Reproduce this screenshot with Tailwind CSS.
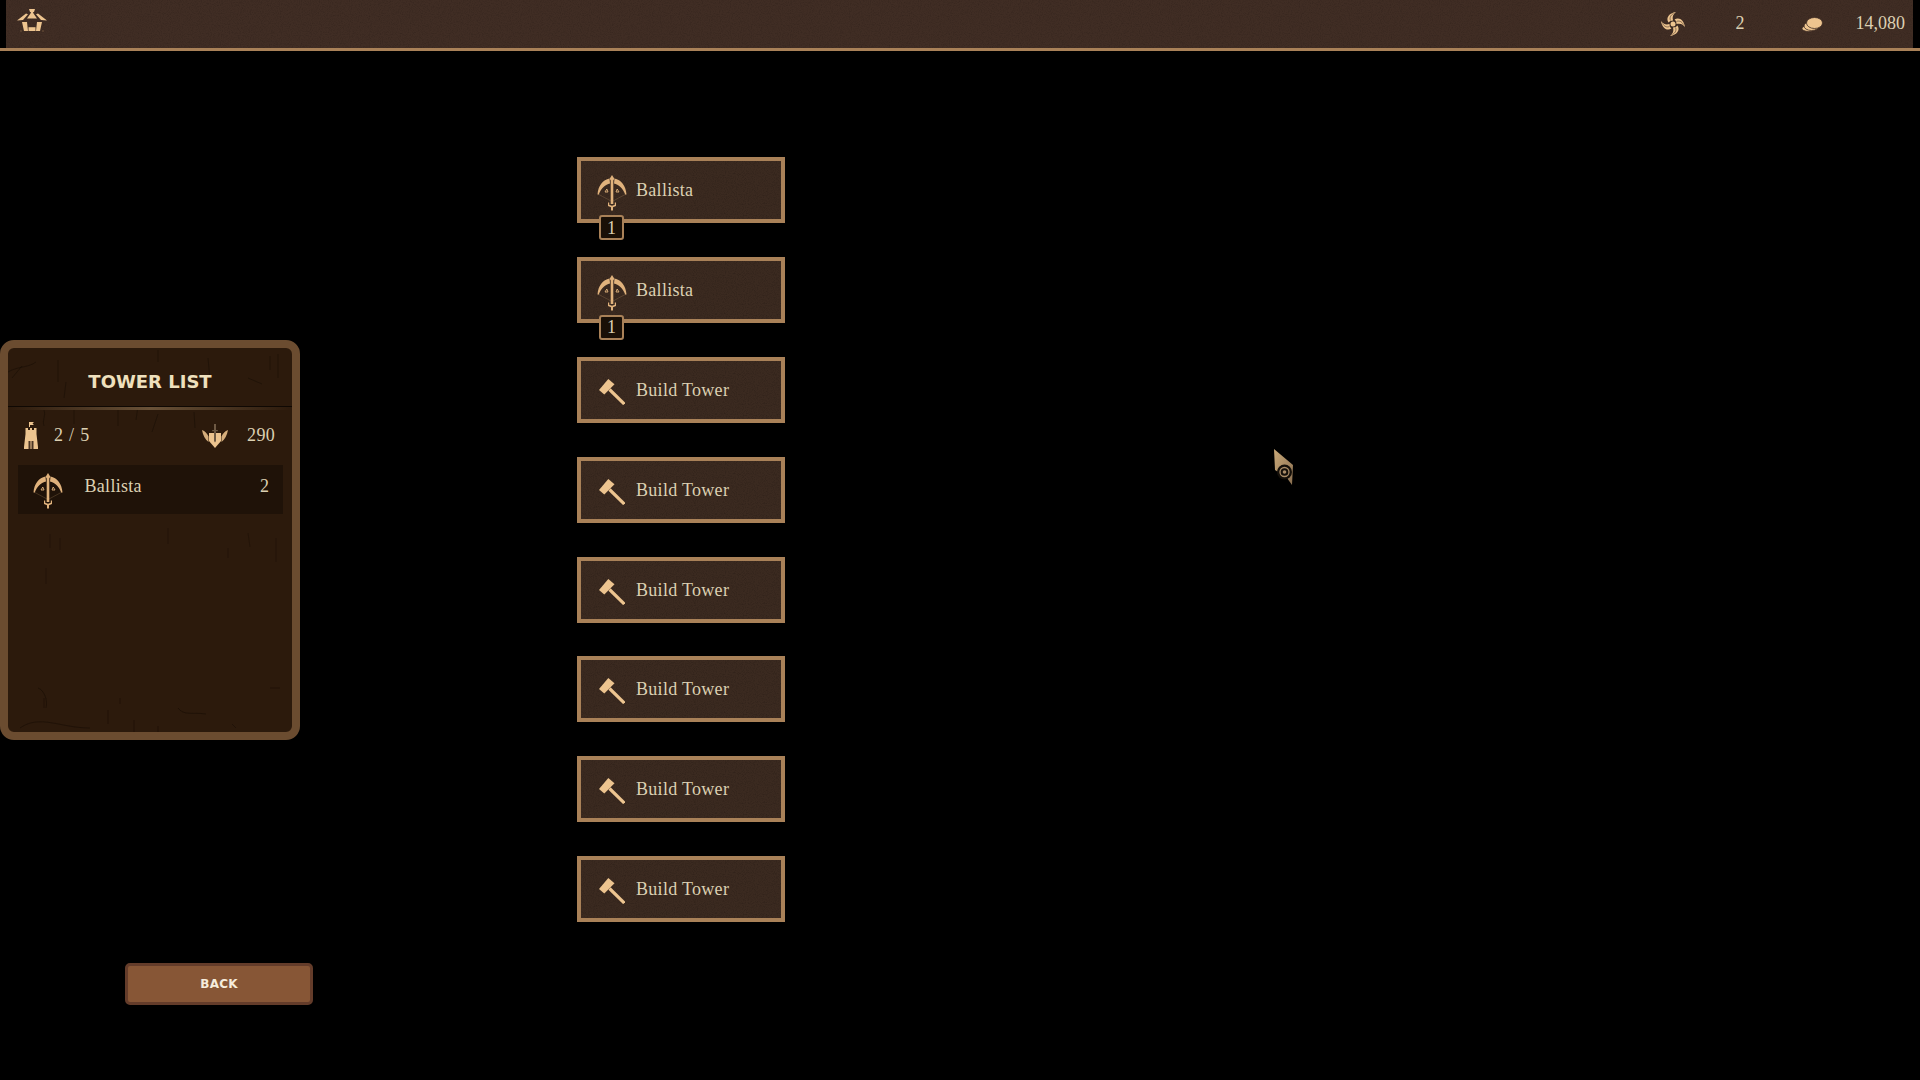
<!DOCTYPE html>
<html lang="en">
  <head>
    <meta charset="UTF-8" />
    <title>Tower List</title>
    <script src="https://cdn.jsdelivr.net/npm/@tailwindcss/browser@4"></script>
  </head>
  <body class="bg-black font-['Liberation_Serif',serif] text-[18px] leading-none text-[#dcd0b2]">
    <!-- shared icons and grain -->
    <svg class="absolute w-0 h-0">
      <defs>
        <filter id="grain" x="0" y="0" width="100%" height="100%">
          <feTurbulence type="fractalNoise" baseFrequency="0.9" numOctaves="2" seed="4" />
          <feColorMatrix values="0 0 0 0 0  0 0 0 0 0  0 0 0 0 0  0 0 0 -1.5 0.85" />
        </filter>
        <symbol id="ballista" viewBox="0 0 30 36">
          <path d="M15 0l2.500 4-1.300 1.200H13.800L12.500 4z" fill="#e0b27c" />
          <path d="M13.700 5h2.600v24h-2.600z" fill="#e0b27c" />
          <path d="M11 27.500h1.200v2.300l2.800 1 2.800-1v-2.300H19V31l-3 1.300V35.500h-2v-3.200L11 31z" fill="#e0b27c" />
          <path d="M.5 19.500C1 11 6 4.500 12.500 3.500l.5 5C8.500 9.500 4 13 1.800 19.500zM29.500 19.500C29 11 24 4.500 17.500 3.500l-.5 5C21.500 9.500 26 13 28.200 19.500z" fill="#e0b27c" />
          <path d="M1 19l13 7M29 19l-13 7" stroke="#e0b27c" stroke-width=".4" opacity=".5" />
          <path d="M8 17l1.800-3 1.200 3zM22 17l-1.800-3-1.200 3z" fill="none" stroke="#e0b27c" stroke-width=".9" />
        </symbol>
        <symbol id="hammer" viewBox="0 0 26 26">
          <path d="M0 11L9.300 0l6.200 5.300L5.300 15.500z" fill="#edc48f" />
          <path d="M10.500 10.500L25.300 25" stroke="#edc48f" stroke-width="3.200" />
        </symbol>
      </defs>
    </svg>

    <div class="relative h-[1080px] overflow-hidden">
      <!-- top bar -->
      <header class="relative ml-[6px] mr-[7px] h-[48px] bg-[#402d24] flex items-center">
        <svg class="absolute inset-0 w-full h-full opacity-20"><rect width="100%" height="100%" filter="url(#grain)" /></svg>
        <svg class="absolute left-[11px] top-[8px] w-[30px] h-[25px]" viewBox="17 8 30 25" fill="#edc48f">
          <path d="M29 9h6l-1 3h-1l.500 1.500L37 18.500H27l3.500-5L31 12h-1z" />
          <path d="M17 20.500l9-7 2 .7-5 5.800zM47 20.500l-9-7-2 .7 5 5.800z" />
          <path d="M22 22h5l1 9h-4zM42 22h-5l-1 9h4z" />
          <path d="M28.500 27.200h7V31h-7z" />
          <path d="M20 30.500h2v1h-2zM42 30.500h2v1h-2z" fill="#6a5138" />
        </svg>
        <div class="relative ml-auto flex items-center h-full pb-[2px]">
          <svg class="w-[24px] h-[24px] mr-[51px] mt-[2px]" viewBox="-12 -12 24 24" fill="#edc48f">
            <circle r="2.500" />
            <g id="blade">
              <path d="M-4.500 -1.500C-7.500 -6 -4 -11 3 -12C0 -10 -1 -7 0 -3.500C-2 -3.500 -3.500 -2.800 -4.500 -1.500z" />
              <path d="M-2.500 -3.500C-3.800 -6.500 -2 -9 .5 -10.500" fill="none" stroke="#402d24" stroke-width=".6" />
            </g>
            <use href="#blade" transform="rotate(90)" />
            <use href="#blade" transform="rotate(180)" />
            <use href="#blade" transform="rotate(270)" />
          </svg>
          <span class="w-[9px] text-center">2</span>
          <svg class="w-[21px] h-[15px] ml-[57px] mt-[2px]" viewBox="0 0 21 15" stroke="#402d24" stroke-width=".8" fill="#edc48f">
            <ellipse cx="6.500" cy="11.500" rx="6.500" ry="3" />
            <ellipse cx="9.500" cy="9" rx="7.500" ry="4.500" />
            <ellipse cx="12.500" cy="6" rx="8" ry="5.500" />
          </svg>
          <span class="ml-[33px] mr-[8px]">14,080</span>
        </div>
      </header>
      <div class="h-[3px] bg-[#a98158]"></div>

      <main class="flex">
        <!-- left column -->
        <section class="w-[577px] shrink-0">
          <div class="relative mt-[289px] w-[300px] h-[400px] border-8 border-[#6b4c30] rounded-[14px] bg-[#2c1a0c] overflow-hidden">
            <svg class="absolute inset-0 w-full h-full" viewBox="0 0 284 384" fill="none" stroke="#0f0803" stroke-width=".8">
              <path d="M50 12v22M58 34l-2 16M150 2v12M200 10l2 22M262 8v14M270 6v24M0 24c10-6 20-4 28-10M4 30l10-12M110 62v16M130 58l-2 14M150 66l-6 18M186 64l1 16M66 62v14M36 62c2 6-2 10 0 16M240 30l14 6" opacity=".45" />
              <path d="M42 186v14M38 220v16M160 180v16M240 185l2 14M268 190v24M52 190v12M220 200v10" opacity=".4" />
              <path d="M30 340c6 2 10 12 8 20M36 350v10M112 350v6M100 362v14M126 372v12M170 360c6 8 14 4 28 6M150 378v6M224 376l4 4M262 340h10M12 380c20-14 40 0 70 0" opacity=".5" />
            </svg>
            <div class="relative h-[58px] pt-[9px] flex items-center justify-center">
              <h2 class="font-['DejaVu_Sans',sans-serif] font-bold text-[18px] text-[#efe0bd]">TOWER LIST</h2>
            </div>
            <div class="relative border-t border-[#0f0803] h-[4px] bg-gradient-to-r from-transparent via-[#6a5238] to-transparent"></div>
            <div class="relative h-[55px] pb-[5px] pl-[16px] pr-[17px] flex items-center">
              <svg class="w-[14px] h-[27px] mr-[16px]" viewBox="0 0 14 27" fill="#edc48f">
                <path d="M5 0h5l-1.500 1.500L10 3H6v2H5z" />
                <path d="M1.500 6h2.500v2h2V6h2v2h2V6h2.500v6l1.500 13v2H0v-2l1.500-13z" />
                <path d="M4.500 27v-8h2v8zM7.500 27v-8h2v8z" fill="#4a3524" />
              </svg>
              <span class="tracking-[0.8px]">2 / 5</span>
              <svg class="w-[26px] h-[24px] ml-auto mr-[19px] mt-[1px]" viewBox="0 0 26 24">
                <path d="M0 6C1 11 3 15.500 6.500 18V12.500C5 9.500 3 7 0 6zM26 6C25 11 23 15.500 19.500 18V12.500C21 9.500 23 7 26 6z" fill="#d6ae7c" />
                <path d="M7 9h12v8l-6 7-6-7z" fill="#edc48f" />
                <path d="M12 0h2v6h1.800v1.200H14V17l-1 1.500L12 17V7.200H10.200V6H12z" fill="#6f5a44" />
              </svg>
              <span class="tracking-[0.3px]">290</span>
            </div>
            <div class="relative ml-[10px] mr-[9px] h-[49px] bg-[#1f1208] flex items-center pl-[15px] pr-[14px]">
              <svg class="w-[30px] h-[36px] mr-[21.500px] mt-[2px]"><use href="#ballista" /></svg>
              <span class="tracking-[0.3px] pb-[7px]">Ballista</span>
              <span class="ml-auto pb-[7px]">2</span>
            </div>
          </div>

          <button class="mt-[223px] ml-[125px] w-[188px] h-[42px] border-[3px] border-[#643c2a] rounded-[5px] bg-[#875636] font-['DejaVu_Sans',sans-serif] font-bold text-[12px] tracking-[0.2px] text-[#f5ecdc]">BACK</button>
        </section>

        <!-- tower slots -->
        <section id="slots" class="mt-[106px] flex flex-col gap-[33.880px]">
          <div class="relative w-[208px] h-[66px] border-4 border-[#a98158] bg-[#3b2a20] flex items-center pl-[16px]">
            <svg class="absolute inset-0 w-full h-full opacity-25"><rect width="100%" height="100%" filter="url(#grain)" /></svg>
            <svg class="relative w-[30px] h-[36px] mr-[9px] mt-[6px]"><use href="#ballista" /></svg>
            <span class="relative tracking-[0.3px]">Ballista</span>
            <span class="absolute left-[18px] top-[54px] w-[25px] h-[25px] border-2 border-[#a98158] rounded-[3px] bg-[#1a1007] flex items-center justify-center">1</span>
          </div>
          <div class="relative w-[208px] h-[66px] border-4 border-[#a98158] bg-[#3b2a20] flex items-center pl-[16px]">
            <svg class="absolute inset-0 w-full h-full opacity-25"><rect width="100%" height="100%" filter="url(#grain)" /></svg>
            <svg class="relative w-[30px] h-[36px] mr-[9px] mt-[6px]"><use href="#ballista" /></svg>
            <span class="relative tracking-[0.3px]">Ballista</span>
            <span class="absolute left-[18px] top-[54px] w-[25px] h-[25px] border-2 border-[#a98158] rounded-[3px] bg-[#1a1007] flex items-center justify-center">1</span>
          </div>
        </section>
      </main>

      <!-- cursor -->
      <svg class="absolute left-[1272px] top-[447px] w-[24px] h-[40px]" viewBox="0 0 24 40">
        <defs>
          <linearGradient id="cursorFill" x1="0" y1="0" x2="1" y2="1">
            <stop offset="0" stop-color="#c9a878" />
            <stop offset="1" stop-color="#8a6f50" />
          </linearGradient>
        </defs>
        <path d="M2 2L21 18L20 38L15 31L3 23z" fill="url(#cursorFill)" />
        <circle cx="12.500" cy="25" r="7.500" fill="#15100a" />
        <circle cx="12.500" cy="25" r="4.500" fill="none" stroke="#a98c68" stroke-width="1.300" />
        <circle cx="12.500" cy="25" r="1.800" fill="#a98c68" />
      </svg>
    </div>

    <script>
      // the six empty slots
      const slots = document.getElementById("slots");
      for (let i = 0; i < 6; i++) {
        const slot = document.createElement("div");
        slot.className = "relative w-[208px] h-[66px] border-4 border-[#a98158] bg-[#3b2a20] flex items-center pl-[16px]";
        slot.innerHTML = `
          <svg class="absolute inset-0 w-full h-full opacity-25"><rect width="100%" height="100%" filter="url(#grain)" /></svg>
          <svg class="relative w-[26px] h-[26px] ml-[2px] mr-[11px] mt-[4px]"><use href="#hammer" /></svg>
          <span class="relative tracking-[0.3px]">Build Tower</span>
        `;
        slots.appendChild(slot);
      }
    </script>
  </body>
</html>
